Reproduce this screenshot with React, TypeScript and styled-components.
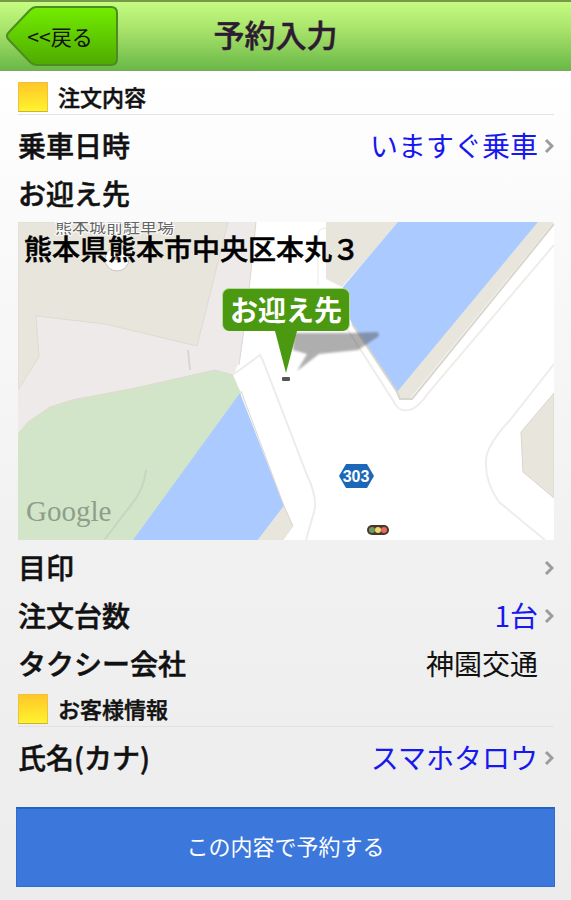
import React from 'react';
import styled, { createGlobalStyle } from 'styled-components';

const GlobalStyle = createGlobalStyle`
  *, *::before, *::after { box-sizing: border-box; }
  body {
    margin: 0;
    background: #eeeeee;
    color: #111111;
    font-family: "Noto Sans CJK JP", sans-serif;
  }
  button { font-family: inherit; color: inherit; }
`;

const Page = styled.div`
  min-height: 100vh;
  background: linear-gradient(#ffffff 70px, #fafafa 220px, #f1f1f1 540px, #ececec 900px);
`;

const Header = styled.header`
  display: grid;
  grid-template-columns: 112px 1fr 132px;
  align-items: center;
  height: 71px;
  padding: 0 6px;
  border-top: 2px solid #779a48;
  border-bottom: 1px solid #77aa5d;
  background: linear-gradient(#c6fc82, #a4e068 45%, #6ab848);
`;

const BackButton = styled.button`
  display: grid;
  width: 112px;
  height: 60px;
  padding: 0;
  border: 0;
  background: none;
  font-size: 21px;
  line-height: 60px;
  cursor: pointer;

  > * { grid-area: 1 / 1; }
  > span { padding-right: 4px; }
`;

const Title = styled.h1`
  margin: 0;
  padding-bottom: 4px;
  text-align: center;
  font-size: 31px;
  font-weight: 500;
  line-height: 60px;
  color: #2d1b32;
  -webkit-text-stroke: 0.5px currentColor;
`;

const Content = styled.main`
  padding: 5px 16px 14px;
`;

const Section = styled.section`
  padding: 0 1px 0 2px;
`;

const SectionTitle = styled.h2`
  display: flex;
  align-items: flex-start;
  gap: 10px;
  height: 39px;
  margin: 0 0 7px;
  padding-top: 6px;
  border-bottom: 1px solid #e2e2e2;
  font-size: 22px;
  font-weight: 500;
  line-height: 28px;
  -webkit-text-stroke: 0.5px currentColor;

  &::before {
    content: "";
    width: 30px;
    height: 30px;
    border: 1px solid #edc23c;
    border-bottom-color: #c9b13c;
    background: linear-gradient(#ffc629, #fff42d);
  }
`;

const Row = styled.div`
  display: flex;
  align-items: center;
  width: 100%;
  height: 48px;
  padding: 0;
  font-size: 28px;
  line-height: 46px;
`;

const RowButton = styled(Row).attrs({ as: 'button', type: 'button' })`
  border: 0;
  background: none;
  text-align: left;
  cursor: pointer;
`;

const Label = styled.span`
  flex: 1;
  align-self: flex-start;
  font-weight: 500;
  -webkit-text-stroke: 0.5px currentColor;
`;

const Value = styled.span<{ $link?: boolean }>`
  align-self: flex-start;
  margin-right: ${({ $link }) => ($link ? '6px' : '16px')};
  color: ${({ $link }) => ($link ? '#1717ef' : '#111111')};
`;

const MapFrame = styled.div`
  position: relative;
  height: 318px;
  margin: 4px 0;
  overflow: hidden;
`;

const MapArt = styled.svg`
  display: block;
  width: 100%;
  height: 100%;
`;

const Address = styled.div`
  position: absolute;
  top: 6px;
  left: 6px;
  font-size: 28px;
  font-weight: 500;
  line-height: 40px;
  color: #000000;
  -webkit-text-stroke: 0.5px currentColor;
`;

const Pin = styled.div`
  position: absolute;
  top: 66px;
  left: 50%;
  display: flex;
  flex-direction: column;
  align-items: center;
  transform: translateX(-50%);
`;

const PinLabel = styled.div`
  padding: 0 7px 2px;
  border: 1px solid #b6dc9c;
  border-bottom: 0;
  border-radius: 7px;
  background: #4b9911;
  color: #ffffff;
  font-size: 28px;
  font-weight: 700;
  line-height: 40px;
`;

const Submit = styled.button`
  width: 100%;
  height: 80px;
  margin-top: 25px;
  padding: 0 0 6px;
  border: 1px solid #2c6dce;
  border-top: 2px solid #2164c2;
  background: #3c78dc;
  color: #ffffff;
  font-size: 22px;
  line-height: 32px;
  cursor: pointer;
`;

const Chevron = () => (
  <svg width="10" height="16" viewBox="0 0 10 16" fill="none" aria-hidden="true">
    <path d="M2 2 L8 8 L2 14" stroke="#9c9c9c" strokeWidth="3" />
  </svg>
);

const StreetMap = () => (
  <MapArt viewBox="18 222 536 318" preserveAspectRatio="xMidYMid slice" aria-label="地図" role="img">
    <defs>
      <filter id="soft" x="-10%" y="-20%" width="120%" height="140%">
        <feGaussianBlur stdDeviation="1" />
      </filter>
    </defs>
    <rect x="18" y="222" width="536" height="318" fill="#ffffff" />
    <path d="M18 222H256L248 300 240 360 233 376 28 440H18Z" fill="#eeeaea" />
    <path d="M256 222L248 300 239 365" fill="none" stroke="#dcd8d2" />
    <path d="M18 222H228L218 262 197 346 105 324 36 316 39 357 18 390Z" fill="#e8e6dc" stroke="#dedbd2" />
    <path d="M188 350L190 370" stroke="#d9d5d2" strokeWidth="2" />
    <path d="M18 434L28 422 50 407 72 400 135 388 215 370 233 375 241 393 200 540H18Z" fill="#d2e5c9" />
    <path d="M18 434L28 422 50 407 72 400 135 388 215 370 233 375" fill="none" stroke="#dddccd" />
    <path d="M240 393L284 506 258 540H133Z" fill="#abcaff" />
    <path d="M284 506L293 526 283 540H258Z" fill="#e8e6dc" />
    <path d="M241 391L284 506 293 526" fill="none" stroke="#d9d5cb" />
    <path d="M293 526L283 540" stroke="#e7e5de" />
    <path d="M146 470Q144 490 131 505L105 539" fill="none" stroke="#c5d8bd" strokeWidth="2" />
    <path d="M234 374L260 355 263 361 285 418 307 475Q318 498 314 512L306 540" fill="none" stroke="#eeecea" strokeWidth="2" />
    <path d="M326 222H399L342 287 326 279Z" fill="#e8e6dc" />
    <path d="M326 228Q318 228 318 236V285" fill="none" stroke="#ece9e4" />
    <path d="M538 222H554L409 400H400L396 392Z" fill="#e8e6dc" />
    <path d="M398 222H538L397 392 352 324 342 298 343 287Z" fill="#abcaff" />
    <path d="M352 324L397 392 400 399H412L554 224" fill="none" stroke="#d9d6ce" strokeWidth="2" />
    <path d="M344 324L394 402Q398 412 410 410 419 407 429 392L554 245" fill="none" stroke="#efede9" strokeWidth="2" />
    <path d="M554 364L510 420Q485 447 486 462 485 482 499 502L545 540" fill="none" stroke="#efede9" strokeWidth="2" />
    <path d="M554 393L521 432 523 472 554 498Z" fill="#e8e6dc" stroke="#d8d5cd" />
    <path d="M294 333H350L378 332 379 336 358 350 319 354 297 371 307 354 293 350Z" fill="#555555" opacity="0.47" filter="url(#soft)" />
    <circle cx="117" cy="259" r="12" fill="#ffffff" stroke="#c7c4bd" />
    <path d="M117 251V260" stroke="#a8764b" strokeWidth="3" />
    <text x="55" y="233" fontSize="17" fill="#666666" stroke="#ffffff" strokeWidth="2" paintOrder="stroke">熊本城前駐車場</text>
    <text x="26" y="521" fontFamily="Liberation Serif, serif" fontSize="29" fill="#8e9e8a">Google</text>
    <path d="M339 476L346 464H367L374 476 367 488H346Z" fill="#1d67b8" />
    <text x="356" y="482" textAnchor="middle" fontFamily="Liberation Sans, sans-serif" fontSize="16" fontWeight="700" fill="#ffffff">303</text>
    <rect x="367" y="525" width="22" height="10" rx="5" fill="#49362e" />
    <circle cx="372" cy="530" r="3" fill="#6d9b62" />
    <circle cx="378" cy="530" r="3" fill="#eddb65" />
    <circle cx="384" cy="530" r="3" fill="#e66c62" />
  </MapArt>
);

export default function App() {
  return (
    <>
      <GlobalStyle />
      <Page>
        <Header>
          <BackButton type="button">
            <svg width="112" height="60" viewBox="0 0 112 60" aria-hidden="true">
              <defs>
                <linearGradient id="back" x1="0" y1="0" x2="0" y2="1">
                  <stop offset="0" stopColor="#73ed00" />
                  <stop offset="1" stopColor="#4eaa00" />
                </linearGradient>
              </defs>
              <path
                d="M30 1H105Q111 1 111 7V53Q111 59 105 59H30Q27 59 24 56L3 34Q-1 30 3 26L24 4Q27 1 30 1Z"
                fill="url(#back)"
                stroke="#4d8c20"
                strokeWidth="2"
              />
            </svg>
            <span>&lt;&lt;戻る</span>
          </BackButton>
          <Title>予約入力</Title>
        </Header>
        <Content>
          <Section>
            <SectionTitle>注文内容</SectionTitle>
            <RowButton>
              <Label>乗車日時</Label>
              <Value $link>いますぐ乗車</Value>
              <Chevron />
            </RowButton>
            <Row>
              <Label>お迎え先</Label>
            </Row>
            <MapFrame>
              <StreetMap />
              <Address>熊本県熊本市中央区本丸３</Address>
              <Pin>
                <PinLabel>お迎え先</PinLabel>
                <svg width="24" height="52" viewBox="0 0 24 52" aria-hidden="true">
                  <path d="M1 0H23L12 42Z" fill="#4b9911" />
                  <rect x="8" y="46" width="8" height="4" rx="1" fill="#555555" />
                </svg>
              </Pin>
            </MapFrame>
            <RowButton>
              <Label>目印</Label>
              <Chevron />
            </RowButton>
            <RowButton>
              <Label>注文台数</Label>
              <Value $link>1台</Value>
              <Chevron />
            </RowButton>
            <Row>
              <Label>タクシー会社</Label>
              <Value>神園交通</Value>
            </Row>
          </Section>
          <Section>
            <SectionTitle>お客様情報</SectionTitle>
            <RowButton>
              <Label>氏名(カナ)</Label>
              <Value $link>スマホタロウ</Value>
              <Chevron />
            </RowButton>
          </Section>
          <Submit type="submit">この内容で予約する</Submit>
        </Content>
      </Page>
    </>
  );
}
